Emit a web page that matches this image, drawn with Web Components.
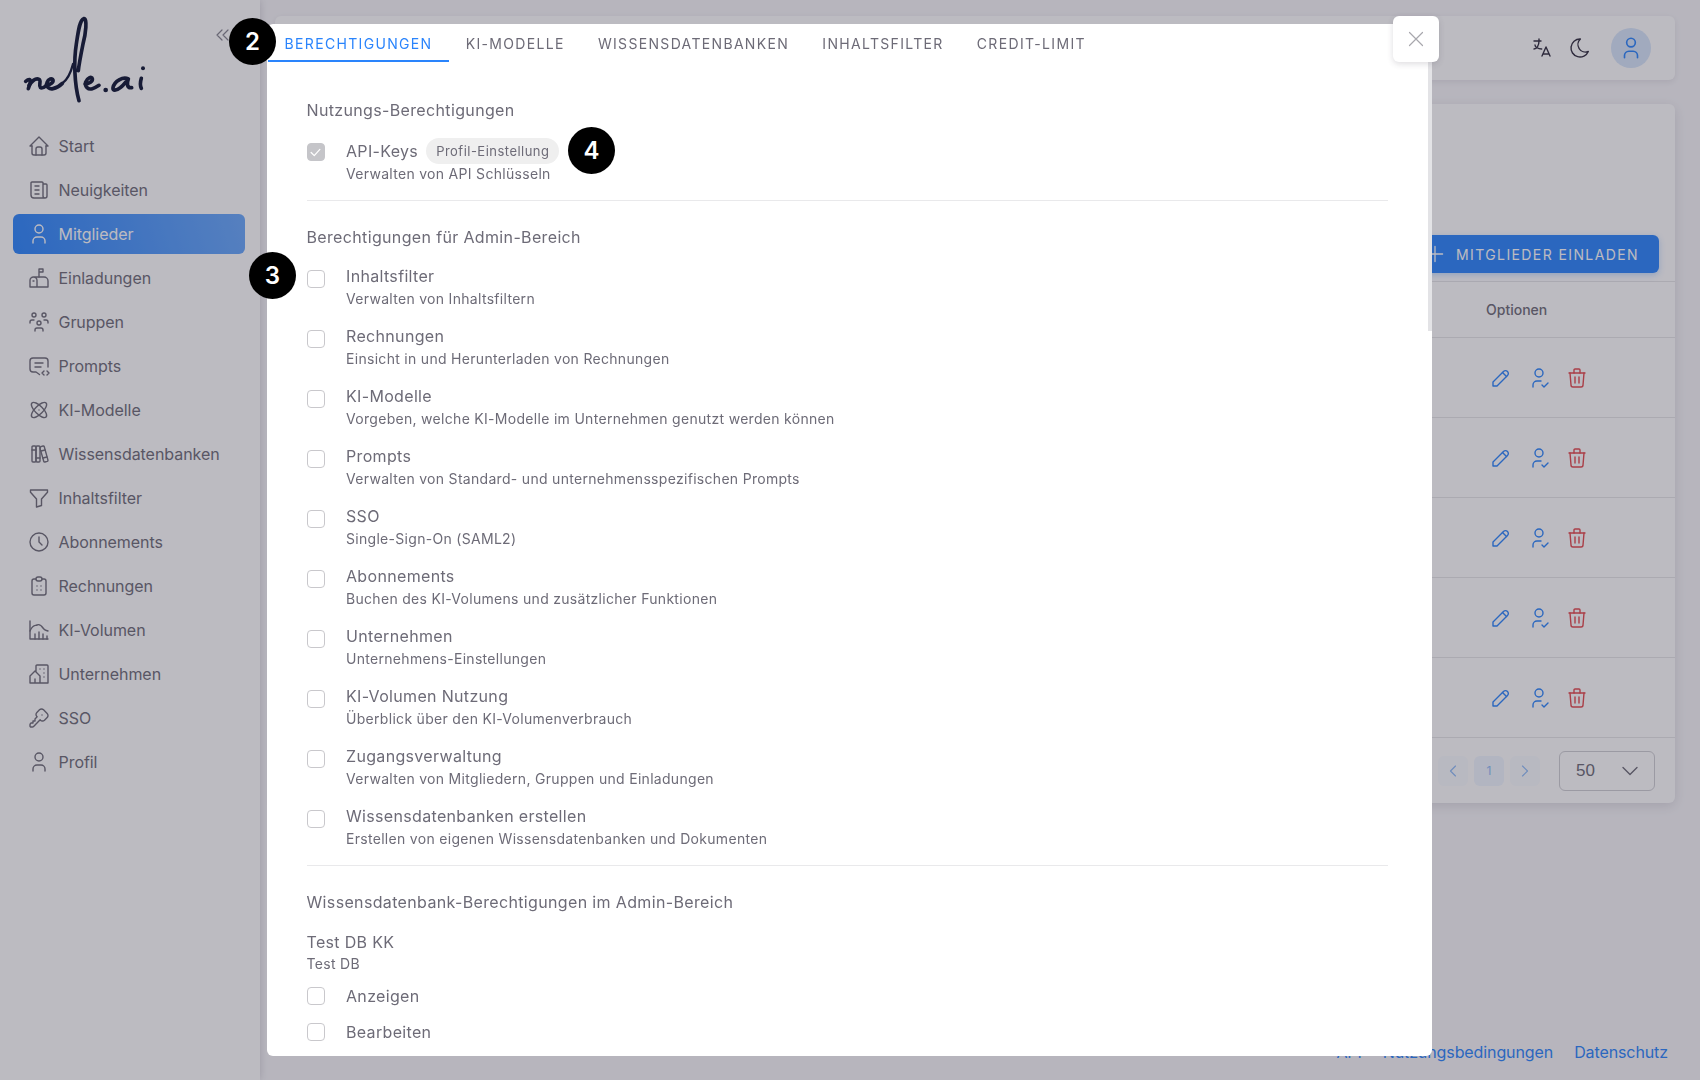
<!DOCTYPE html>
<html lang="de">
<head>
<meta charset="utf-8">
<title>nele.ai</title>
<style>
  html, body { margin: 0; height: 100%; }
  body {
    width: 1700px;
    height: 1080px;
    overflow: hidden;
    background: #f8f7fa;
    color: #6d6b77;
    font-family: Inter, "Liberation Sans", sans-serif;
    font-size: 16px;
    display: flex;
  }
</style>
</head>
<body>
<side-nav>
  <nav-item icon="home">Start</nav-item>
  <nav-item icon="news">Neuigkeiten</nav-item>
  <nav-item icon="user" active>Mitglieder</nav-item>
  <nav-item icon="mailbox">Einladungen</nav-item>
  <nav-item icon="groups">Gruppen</nav-item>
  <nav-item icon="prompt">Prompts</nav-item>
  <nav-item icon="atom">KI-Modelle</nav-item>
  <nav-item icon="books">Wissensdatenbanken</nav-item>
  <nav-item icon="filter">Inhaltsfilter</nav-item>
  <nav-item icon="clock">Abonnements</nav-item>
  <nav-item icon="invoice">Rechnungen</nav-item>
  <nav-item icon="chart">KI-Volumen</nav-item>
  <nav-item icon="building">Unternehmen</nav-item>
  <nav-item icon="key">SSO</nav-item>
  <nav-item icon="user">Profil</nav-item>
</side-nav>

<main-area>
  <top-bar></top-bar>
  <member-table></member-table>
  <page-footer></page-footer>
</main-area>

<perm-dialog>
  <perm-section heading="Nutzungs-Berechtigungen" divided>
    <perm-row label="API-Keys" desc="Verwalten von API Schlüsseln" pill="Profil-Einstellung" checked></perm-row>
  </perm-section>
  <perm-section heading="Berechtigungen für Admin-Bereich" divided>
    <perm-row label="Inhaltsfilter" desc="Verwalten von Inhaltsfiltern"></perm-row>
    <perm-row label="Rechnungen" desc="Einsicht in und Herunterladen von Rechnungen"></perm-row>
    <perm-row label="KI-Modelle" desc="Vorgeben, welche KI-Modelle im Unternehmen genutzt werden können"></perm-row>
    <perm-row label="Prompts" desc="Verwalten von Standard- und unternehmensspezifischen Prompts"></perm-row>
    <perm-row label="SSO" desc="Single-Sign-On (SAML2)"></perm-row>
    <perm-row label="Abonnements" desc="Buchen des KI-Volumens und zusätzlicher Funktionen"></perm-row>
    <perm-row label="Unternehmen" desc="Unternehmens-Einstellungen"></perm-row>
    <perm-row label="KI-Volumen Nutzung" desc="Überblick über den KI-Volumenverbrauch"></perm-row>
    <perm-row label="Zugangsverwaltung" desc="Verwalten von Mitgliedern, Gruppen und Einladungen"></perm-row>
    <perm-row label="Wissensdatenbanken erstellen" desc="Erstellen von eigenen Wissensdatenbanken und Dokumenten"></perm-row>
  </perm-section>
  <perm-section heading="Wissensdatenbank-Berechtigungen im Admin-Bereich">
    <db-group label="Test DB KK" desc="Test DB">
      <perm-row label="Anzeigen" compact></perm-row>
      <perm-row label="Bearbeiten" compact></perm-row>
    </db-group>
  </perm-section>
</perm-dialog>

<step-badge style="left:229px;top:18px">2</step-badge>
<step-badge style="left:249px;top:252px">3</step-badge>
<step-badge style="left:568px;top:127px">4</step-badge>

<script>
const ICONS = {
  home: '<path d="M5 12H3l9-9 9 9h-2"/><path d="M5 12v7a2 2 0 0 0 2 2h10a2 2 0 0 0 2-2v-7"/><path d="M9 21v-6a2 2 0 0 1 2-2h2a2 2 0 0 1 2 2v6"/>',
  news: '<path d="M16 6h3a1 1 0 0 1 1 1v11a2 2 0 0 1-4 0V5a1 1 0 0 0-1-1H5a1 1 0 0 0-1 1v12a3 3 0 0 0 3 3h11"/><path d="M8 8h4M8 12h4M8 16h4"/>',
  user: '<circle cx="12" cy="7" r="4"/><path d="M6 21v-2a4 4 0 0 1 4-4h4a4 4 0 0 1 4 4v2"/>',
  mailbox: '<path d="M10 21v-6.5a3.5 3.5 0 0 0-7 0V21h18v-6a4 4 0 0 0-4-4H6.5"/><path d="M12 11V3h4v3h-4"/><path d="M6 15h1"/>',
  groups: '<path d="M10 13a2 2 0 1 0 4 0 2 2 0 0 0-4 0"/><path d="M8 21v-1a2 2 0 0 1 2-2h4a2 2 0 0 1 2 2v1"/><path d="M15 5a2 2 0 1 0 4 0 2 2 0 0 0-4 0"/><path d="M17 10h2a2 2 0 0 1 2 2v1"/><path d="M5 5a2 2 0 1 0 4 0 2 2 0 0 0-4 0"/><path d="M3 13v-1a2 2 0 0 1 2-2h2"/>',
  prompt: '<path d="M8 9h8M8 13h6"/><path d="M12.5 20.5 9 18H6a3 3 0 0 1-3-3V7a3 3 0 0 1 3-3h12a3 3 0 0 1 3 3v6"/><path d="m20 21 2-2-2-2M17 17l-2 2 2 2"/>',
  atom: '<path d="M12 12v.01"/><path d="M19.071 4.929c-1.562-1.562-6 .337-9.9 4.243-3.905 3.905-5.804 8.337-4.242 9.899 1.562 1.562 6-.337 9.9-4.243 3.905-3.905 5.804-8.337 4.242-9.9"/><path d="M4.929 4.929c-1.562 1.562.337 6 4.243 9.9 3.905 3.905 8.337 5.804 9.899 4.242 1.562-1.562-.337-6-4.243-9.9-3.905-3.905-8.337-5.804-9.9-4.242"/>',
  books: '<path d="M5 5a1 1 0 0 1 1-1h2a1 1 0 0 1 1 1v14a1 1 0 0 1-1 1H6a1 1 0 0 1-1-1z"/><path d="M9 5a1 1 0 0 1 1-1h2a1 1 0 0 1 1 1v14a1 1 0 0 1-1 1h-2a1 1 0 0 1-1-1z"/><path d="M5 8h4M9 16h4"/><path d="m13.803 4.56 2.184-.53c.562-.135 1.133.19 1.282.732l3.695 13.418a1.02 1.02 0 0 1-.634 1.219l-.133.041-2.184.53c-.562.135-1.133-.19-1.282-.732L13.036 6.32a1.02 1.02 0 0 1 .634-1.219z"/><path d="m14 9 4-1M16 16l3.923-.98"/>',
  filter: '<path d="M3.5 4h17v2.2L14.5 13v6.5L9.5 21v-8L3.5 6.2z"/>',
  clock: '<circle cx="12" cy="12" r="9"/><path d="M12 7v5l3 3"/>',
  invoice: '<path d="M9 5H7a2 2 0 0 0-2 2v12a2 2 0 0 0 2 2h10a2 2 0 0 0 2-2V7a2 2 0 0 0-2-2h-2"/><rect x="9" y="3" width="6" height="4" rx="2"/><path d="M10 12h.01M14 12h.01M10 16h.01M14 16h.01"/>',
  chart: '<path d="M3 3v18h18"/><path d="M3 13c3-7 5-5 7-6s4 0 6 3 3 2 5 3"/><path d="M8 21v-5M12 21v-7M16 21v-5M20 21v-3"/>',
  building: '<path d="m8 9 5 5v7H8v-4m0 4H3v-7l5-5m1 1V4a1 1 0 0 1 1-1h10a1 1 0 0 1 1 1v17h-8"/><path d="M13 7v.01M17 7v.01M17 11v.01M17 15v.01"/>',
  key: '<path d="m16.555 3.843 3.602 3.602a2.877 2.877 0 0 1 0 4.069l-2.643 2.643a2.877 2.877 0 0 1-4.069 0l-.301-.301-6.558 6.558a2 2 0 0 1-1.239.578L5.172 21H4a1 1 0 0 1-1-1v-1.172a2 2 0 0 1 .586-1.414L4 17h2v-2h2v-2l2.144-2.144-.301-.301a2.877 2.877 0 0 1 0-4.069l2.643-2.643a2.877 2.877 0 0 1 4.069 0z"/><path d="M15 9h.01"/>',
  language: '<path d="M4 5h7M9 3v2c0 4.418-2.239 8-5 8"/><path d="M5 9c0 2.144 2.952 3.908 6.7 4"/><path d="m12 20 4-9 4 9M19.1 18h-6.2"/>',
  moon: '<path d="M12 3h.393a7.5 7.5 0 0 0 7.92 12.446A9 9 0 1 1 12 2.992z"/>',
  pencil: '<path d="M4 20h4L18.5 9.5a2.828 2.828 0 1 0-4-4L4 16v4"/><path d="m13.5 6.5 4 4"/>',
  usercheck: '<path d="M8 7a4 4 0 1 0 8 0 4 4 0 0 0-8 0"/><path d="M6 21v-2a4 4 0 0 1 4-4h4"/><path d="m15 19 2 2 4-4"/>',
  trash: '<path d="M4 7h16M10 11v6M14 11v6"/><path d="m5 7 1 12a2 2 0 0 0 2 2h8a2 2 0 0 0 2-2l1-12"/><path d="M9 7V4a1 1 0 0 1 1-1h4a1 1 0 0 1 1 1v3"/>',
  plus: '<path d="M12 5v14M5 12h14"/>',
  close: '<path d="M18 6 6 18M6 6l12 12"/>',
  left: '<path d="m15 6-6 6 6 6"/>',
  right: '<path d="m9 6 6 6-6 6"/>',
  down: '<path d="m6 9 6 6 6-6"/>',
  collapse: '<path d="m11 7-5 5 5 5M17 7l-5 5 5 5"/>',
  check: '<path d="m5 12 5 5 9-10"/>'
};

class UiIcon extends HTMLElement {
  connectedCallback() {
    const size = this.getAttribute("size") || 24;
    const weight = this.getAttribute("weight") || 1.4;
    this.attachShadow({ mode: "open" }).innerHTML = `
      <style>
        :host { display: inline-flex; flex: none; }
        svg { display: block; fill: none; stroke: currentColor; stroke-linecap: round; stroke-linejoin: round; }
      </style>
      <svg width="${size}" height="${size}" viewBox="0 0 24 24" stroke-width="${weight}">${ICONS[this.getAttribute("name")]}</svg>`;
  }
}
customElements.define("ui-icon", UiIcon);

const navTemplate = document.createElement("template");
navTemplate.innerHTML = `
  <style>
    :host {
      display: flex;
      flex-direction: column;
      flex: none;
      box-sizing: border-box;
      width: 260px;
      height: 1080px;
      padding: 0 15px 0 13px;
      background: #fff;
      box-shadow: 0 0 8px rgba(47, 43, 61, .2);
      position: relative;
    }
    .brand {
      height: 126px;
      flex: none;
      display: flex;
      justify-content: space-between;
      align-items: flex-start;
    }
    .brand svg.logo { margin: 10px 0 0 2px; }
    .collapse { margin: 23px 10px 0 0; color: #85838f; }
    .list { display: flex; flex-direction: column; }
  </style>
  <div class="brand">
    <svg class="logo" role="img" aria-label="nele.ai" width="140" height="100" viewBox="0 0 420 300" fill="none" stroke="#0d1433" stroke-width="11" stroke-linecap="round" stroke-linejoin="round">
      <path d="M32 214c10-8 15-6 14 2-1 8-5 16-6 20"/>
      <path d="M42 226c10-14 22-22 30-18 8 4-2 18 4 24 4 4 12 0 20-6"/>
      <path d="M94 224c10 2 22-6 20-14-2-6-14-4-18 8-4 14 8 20 18 18 10-2 20-8 28-16"/>
      <path d="M142 220c14-10 24-26 32-58" stroke-width="7"/>
      <path d="M192 272c-14-50-16-120-8-170 6-40 10-72 22-76 12-2 6 46-2 76-6 30-12 60-14 80"/>
      <path d="M210 222c12 0 24-8 22-16-2-8-16-2-20 10-4 14 8 24 20 20 8-2 14-6 20-10"/>
      <circle cx="272" cy="240" r="7" fill="#0d1433" stroke="none"/>
      <path d="M340 207c-16-8-42 6-46 26-2 10 10 10 22 0 10-8 20-22 24-26-4 10-6 28 10 26"/>
      <path d="M379 205c-3 10-4 22 0 30"/>
      <circle cx="384" cy="175" r="6" fill="#0d1433" stroke="none"/>
    </svg>
    <ui-icon class="collapse" name="collapse" weight="1.2"></ui-icon>
  </div>
  <div class="list"><slot></slot></div>
`;
class SideNav extends HTMLElement {
  constructor() {
    super();
    this.attachShadow({ mode: "open" }).appendChild(navTemplate.content.cloneNode(true));
  }
}
customElements.define("side-nav", SideNav);

class NavItem extends HTMLElement {
  connectedCallback() {
    this.attachShadow({ mode: "open" }).innerHTML = `
      <style>
        :host {
          display: flex;
          align-items: center;
          gap: 7.5px;
          height: 40px;
          padding: 0 14px;
          border-radius: 6px;
          font-size: 16px;
          letter-spacing: -.05px;
          margin-bottom: 4px;
        }
        :host([active]) {
          color: #fff;
          background: linear-gradient(72deg, #2a84fc, rgba(42, 132, 252, .7));
        }
      </style>
      <ui-icon name="${this.getAttribute("icon")}"></ui-icon>
      <span><slot></slot></span>`;
  }
}
customElements.define("nav-item", NavItem);

class MainArea extends HTMLElement {
  constructor() {
    super();
    this.attachShadow({ mode: "open" }).innerHTML = `
      <style>
        :host {
          flex: 1;
          display: flex;
          flex-direction: column;
          gap: 24px;
          padding: 16px 25px 0 15px;
          min-width: 0;
        }
      </style>
      <slot></slot>`;
  }
}
customElements.define("main-area", MainArea);

class TopBar extends HTMLElement {
  constructor() {
    super();
    this.attachShadow({ mode: "open" }).innerHTML = `
      <style>
        :host {
          display: flex;
          justify-content: flex-end;
          align-items: center;
          gap: 14px;
          height: 64px;
          padding-right: 24px;
          background: #fff;
          border-radius: 6px;
          box-shadow: 0 2px 6px rgba(47, 43, 61, .1);
          color: #2f2b3d;
        }
        .avatar {
          width: 40px;
          height: 40px;
          border-radius: 50%;
          margin-left: 5px;
          background: #d7e6fb;
          color: #2a84fc;
          display: flex;
          align-items: center;
          justify-content: center;
        }
      </style>
      <ui-icon name="language"></ui-icon>
      <ui-icon name="moon"></ui-icon>
      <div class="avatar"><ui-icon name="user" size="26" weight="1.5"></ui-icon></div>`;
  }
}
customElements.define("top-bar", TopBar);

class MemberTable extends HTMLElement {
  constructor() {
    super();
    const rows = [1, 2, 3, 4, 5].map(() => `
      <div class="row">
        <div class="actions">
          <ui-icon name="pencil"></ui-icon>
          <ui-icon name="usercheck"></ui-icon>
          <ui-icon class="danger" name="trash"></ui-icon>
        </div>
      </div>`).join("");
    this.attachShadow({ mode: "open" }).innerHTML = `
      <style>
        :host {
          display: block;
          background: #fff;
          border-radius: 6px;
          box-shadow: 0 3px 12px rgba(47, 43, 61, .14);
        }
        .head {
          height: 178px;
          box-sizing: border-box;
          display: flex;
          justify-content: flex-end;
          align-items: flex-end;
          padding: 0 16px 8px 0;
          border-bottom: 1px solid #e6e6e8;
        }
        .invite {
          display: flex;
          align-items: center;
          gap: 8px;
          height: 38px;
          padding: 0 20px;
          background: #2a84fc;
          color: #fff;
          border-radius: 6px;
          font-size: 14px;
          letter-spacing: 1.4px;
          text-transform: uppercase;
          box-shadow: 0 2px 6px rgba(42, 132, 252, .3);
        }
        .cols, .row {
          display: grid;
          grid-template-columns: 1fr 189px;
          align-items: center;
          box-sizing: border-box;
          border-bottom: 1px solid #e6e6e8;
        }
        .cols { height: 56px; font-size: 14px; font-weight: 500; }
        .cols span { grid-column: 2; }
        .row { height: 80px; }
        .actions {
          grid-column: 2;
          display: flex;
          gap: 14px;
          margin-left: 3px;
          color: #2a84fc;
        }
        .danger { color: #e5484d; }
        .pager {
          height: 65px;
          display: flex;
          justify-content: flex-end;
          align-items: center;
          gap: 6px;
          padding-right: 20px;
        }
        .page {
          width: 30px;
          height: 30px;
          border-radius: 6px;
          background: rgba(42, 132, 252, .025);
          color: #8fbcf8;
          font-size: 12px;
          display: flex;
          align-items: center;
          justify-content: center;
        }
        .page.on { background: rgba(42, 132, 252, .07); }
        .size {
          width: 96px;
          height: 40px;
          box-sizing: border-box;
          margin-left: 13px;
          padding: 0 10px 0 16px;
          border: 1px solid #cfcfd3;
          border-radius: 6px;
          display: flex;
          align-items: center;
          justify-content: space-between;
          font-family: "Liberation Sans", sans-serif;
          font-size: 17px;
        }
      </style>
      <div class="head">
        <div class="invite"><ui-icon name="plus" size="26" weight="1.2"></ui-icon><span>Mitglieder einladen</span></div>
      </div>
      <div class="cols"><span>Optionen</span></div>
      ${rows}
      <div class="pager">
        <div class="page"><ui-icon name="left" size="20"></ui-icon></div>
        <div class="page on">1</div>
        <div class="page"><ui-icon name="right" size="20"></ui-icon></div>
        <div class="size"><span>50</span><ui-icon name="down" size="28" weight="1.2"></ui-icon></div>
      </div>`;
  }
}
customElements.define("member-table", MemberTable);

class PageFooter extends HTMLElement {
  constructor() {
    super();
    this.attachShadow({ mode: "open" }).innerHTML = `
      <style>
        :host {
          margin-top: auto;
          height: 38px;
          padding-right: 7px;
          display: flex;
          justify-content: flex-end;
          gap: 21px;
          color: #2a84fc;
          font-size: 16px;
          letter-spacing: -.1px;
        }
      </style>
      <span>API</span>
      <span>Nutzungsbedingungen</span>
      <span>Datenschutz</span>`;
  }
}
customElements.define("page-footer", PageFooter);

const dialogTemplate = document.createElement("template");
dialogTemplate.innerHTML = `
  <style>
    :host {
      position: fixed;
      inset: 0;
      z-index: 10;
      background: rgba(47, 43, 61, .32);
      padding: 24px 0 0 267px;
      box-sizing: border-box;
      display: block;
    }
    .box {
      position: relative;
      width: 1165px;
      height: 1032px;
      background: #fff;
      border-radius: 6px;
    }
    .clip {
      height: 100%;
      overflow: hidden;
      border-radius: 6px;
    }
    .tabs {
      display: flex;
      height: 38px;
      font-size: 14px;
      letter-spacing: 1.33px;
      text-transform: uppercase;
    }
    .tab {
      display: flex;
      align-items: center;
      padding: 0 16.6px;
      box-sizing: border-box;
    }
    .tab.on {
      color: #2a84fc;
      border-bottom: 2px solid #2a84fc;
      padding-top: 2px;
      margin-left: 1px;
    }
    .body { padding: 36px 44px 0 39.5px; }
    .thumb {
      position: absolute;
      right: 0;
      top: 0;
      width: 4px;
      height: 307px;
      background: #e3e3e6;
    }
    .close {
      position: absolute;
      left: 1126px;
      top: -8px;
      width: 46px;
      height: 46px;
      border-radius: 6px;
      background: #fff;
      color: #a8a7ad;
      box-shadow: 0 2px 6px rgba(47, 43, 61, .16);
      display: flex;
      align-items: center;
      justify-content: center;
    }
  </style>
  <div class="box">
    <div class="clip">
      <div class="tabs">
        <div class="tab on">Berechtigungen</div>
        <div class="tab">KI-Modelle</div>
        <div class="tab">Wissensdatenbanken</div>
        <div class="tab">Inhaltsfilter</div>
        <div class="tab">Credit-Limit</div>
      </div>
      <div class="body"><slot></slot></div>
    </div>
    <div class="thumb"></div>
    <div class="close"><ui-icon name="close" size="26" weight="1.1"></ui-icon></div>
  </div>
`;
class PermDialog extends HTMLElement {
  constructor() {
    super();
    this.attachShadow({ mode: "open" }).appendChild(dialogTemplate.content.cloneNode(true));
  }
}
customElements.define("perm-dialog", PermDialog);

class PermSection extends HTMLElement {
  connectedCallback() {
    this.attachShadow({ mode: "open" }).innerHTML = `
      <style>
        :host { display: block; }
        :host([divided]) {
          border-bottom: 1px solid #e9e9eb;
          margin-bottom: 24px;
          padding-bottom: 1px;
        }
        h3 {
          margin: 0 0 15px;
          font-size: 16px;
          line-height: 24px;
          font-weight: 400;
          letter-spacing: .35px;
        }
      </style>
      <h3>${this.getAttribute("heading")}</h3>
      <slot></slot>`;
  }
}
customElements.define("perm-section", PermSection);

class PermRow extends HTMLElement {
  connectedCallback() {
    const pill = this.getAttribute("pill");
    const desc = this.getAttribute("desc");
    this.attachShadow({ mode: "open" }).innerHTML = `
      <style>
        :host {
          display: grid;
          grid-template-columns: 39.5px 1fr;
          margin-bottom: 15px;
        }
        :host([compact]) { margin-bottom: 12px; }
        :host([pill]) .text { padding-top: 2px; }
        .box {
          width: 18px;
          height: 18px;
          margin-top: 6px;
          box-sizing: border-box;
          border: 1.5px solid #c9c8cc;
          border-radius: 4px;
          color: #fff;
        }
        :host([compact]) .box { margin-top: 3px; }
        :host([checked]) .box { background: #c5c5c9; border-color: #c5c5c9; }
        .title {
          display: flex;
          align-items: center;
          gap: 8px;
          height: 24px;
          font-size: 16px;
          letter-spacing: .33px;
        }
        .pill {
          height: 26px;
          padding: 0 10px;
          border-radius: 13px;
          background: #efefef;
          font-size: 13px;
          line-height: 26px;
          letter-spacing: .48px;
        }
        .desc {
          font-size: 14px;
          line-height: 21px;
          letter-spacing: .3px;
        }
      </style>
      <div class="box">${this.hasAttribute("checked") ? '<ui-icon name="check" size="15" weight="2"></ui-icon>' : ""}</div>
      <div class="text">
        <div class="title"><span>${this.getAttribute("label")}</span>${pill ? `<span class="pill">${pill}</span>` : ""}</div>
        ${desc ? `<div class="desc">${desc}</div>` : ""}
      </div>`;
  }
}
customElements.define("perm-row", PermRow);

class DbGroup extends HTMLElement {
  connectedCallback() {
    this.attachShadow({ mode: "open" }).innerHTML = `
      <style>
        :host { display: block; }
        .name { font-size: 16px; line-height: 26px; margin-bottom: -2px; letter-spacing: .33px; }
        .sub { font-size: 14px; line-height: 21px; letter-spacing: .3px; margin-bottom: 10px; }
      </style>
      <div class="name">${this.getAttribute("label")}</div>
      <div class="sub">${this.getAttribute("desc")}</div>
      <slot></slot>`;
  }
}
customElements.define("db-group", DbGroup);

class StepBadge extends HTMLElement {
  constructor() {
    super();
    this.attachShadow({ mode: "open" }).innerHTML = `
      <style>
        :host {
          position: fixed;
          z-index: 20;
          width: 47px;
          height: 47px;
          border-radius: 50%;
          background: #000;
          color: #fff;
          font-size: 24px;
          font-weight: 600;
          display: flex;
          align-items: center;
          justify-content: center;
        }
      </style>
      <slot></slot>`;
  }
}
customElements.define("step-badge", StepBadge);
</script>
</body>
</html>
